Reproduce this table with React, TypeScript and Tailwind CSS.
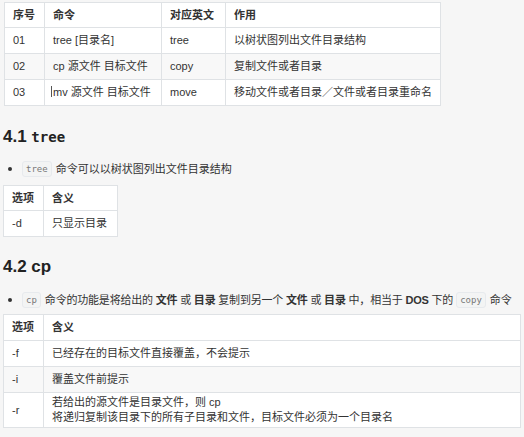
const font = "font-['Liberation_Sans','Noto_Sans_CJK_SC',sans-serif]";
const mono = "font-['DejaVu_Sans_Mono','Liberation_Mono',monospace]";

const commands = [
  { no: "01", cmd: "tree [目录名]", en: "tree", use: "以树状图列出文件目录结构" },
  { no: "02", cmd: "cp 源文件 目标文件", en: "copy", use: "复制文件或者目录" },
  { no: "03", cmd: "mv 源文件 目标文件", en: "move", use: "移动文件或者目录／文件或者目录重命名" },
];

const cpOptions = [
  { opt: "-f", desc: ["已经存在的目标文件直接覆盖，不会提示"] },
  { opt: "-i", desc: ["覆盖文件前提示"] },
  {
    opt: "-r",
    desc: [
      "若给出的源文件是目录文件，则 cp",
      "将递归复制该目录下的所有子目录和文件，目标文件必须为一个目录名",
    ],
  },
];

const th = "border border-[#dfe2e5] px-[8px] text-left font-bold whitespace-nowrap";
const td = "border border-[#dfe2e5] px-[8px] font-normal whitespace-nowrap";

function Code({ children }: { children: string }) {
  return (
    <span
      className={`${mono} ml-[1px] mr-[4px] shrink-0 rounded-[3px] border border-[#e7eaed] bg-[#f3f4f4] px-[3px] py-[1px] text-[9px] leading-[12px] text-[#777]`}
    >
      {children}
    </span>
  );
}

function Bullet({ children }: { children: React.ReactNode }) {
  return (
    <div className="flex h-[18px] items-center pl-[5px]">
      <span className="mr-[9px] h-[4px] w-[4px] shrink-0 rounded-full bg-[#333]" />
      <div className="flex items-center whitespace-nowrap">{children}</div>
    </div>
  );
}

export default function App() {
  return (
    <div className={`${font} h-[437px] w-[524px] overflow-hidden bg-[#f6f6f6] pl-[3px] pt-[2px] text-[11px] text-[#333]`}>
      {/* command overview */}
      <table className="ml-[1px] table-fixed border-collapse bg-white">
        <thead>
          <tr className="h-[25px]">
            <th className={`${th} w-[40px]`}>序号</th>
            <th className={`${th} w-[117px]`}>命令</th>
            <th className={`${th} w-[64px]`}>对应英文</th>
            <th className={`${th} w-[214px]`}>作用</th>
          </tr>
        </thead>
        <tbody>
          {commands.map((c, i) => (
            <tr key={c.no} className={`h-[26px] ${i % 2 === 1 ? "bg-[#f8f8f8]" : "bg-white"}`}>
              <td className={td}>{c.no}</td>
              <td className={`${td} relative`}>
                {c.no === "03" && (
                  <span className="absolute left-[6px] top-[6px] h-[11px] w-[1px] bg-[#555]" />
                )}
                {c.cmd}
              </td>
              <td className={td}>{c.en}</td>
              <td className={td}>{c.use}</td>
            </tr>
          ))}
        </tbody>
      </table>

      {/* 4.1 tree */}
      <h2 className="mt-[19px] flex h-[24px] items-center text-[17px] font-bold text-[#222]">
        4.1&nbsp;<span className={`${mono} text-[14px]`}>tree</span>
      </h2>
      <div className="mt-[11px]">
        <Bullet>
          <Code>tree</Code>
          <span>命令可以以树状图列出文件目录结构</span>
        </Bullet>
      </div>
      <table className="mt-[7px] table-fixed border-collapse bg-white">
        <thead>
          <tr className="h-[25px]">
            <th className={`${th} w-[40px]`}>选项</th>
            <th className={`${th} w-[74px]`}>含义</th>
          </tr>
        </thead>
        <tbody>
          <tr className="h-[26px]">
            <td className={td}>-d</td>
            <td className={td}>只显示目录</td>
          </tr>
        </tbody>
      </table>

      {/* 4.2 cp */}
      <h2 className="mt-[18px] flex h-[24px] items-center text-[17px] font-bold text-[#222]">4.2 cp</h2>
      <div className="mt-[12px]">
        <Bullet>
          <Code>cp</Code>
          <span className="mr-[2px] tracking-[-0.2px]">
            命令的功能是将给出的 <b>文件</b> 或 <b>目录</b> 复制到另一个 <b>文件</b> 或 <b>目录</b> 中，相当于{" "}
            <b>DOS</b> 下的
          </span>
          <Code>copy</Code>
          <span>命令</span>
        </Bullet>
      </div>
      <table className="mt-[5px] table-fixed border-collapse bg-white">
        <thead>
          <tr className="h-[26px]">
            <th className={`${th} w-[40px]`}>选项</th>
            <th className={`${th} w-[477px]`}>含义</th>
          </tr>
        </thead>
        <tbody>
          {cpOptions.map((o, i) => (
            <tr
              key={o.opt}
              className={`${o.desc.length > 1 ? "h-[35px]" : "h-[26px]"} ${i % 2 === 1 ? "bg-[#f8f8f8]" : "bg-white"}`}
            >
              <td className={td}>{o.opt}</td>
              <td className={`${td} leading-[15px]`}>
                {o.desc.map((line) => (
                  <div key={line}>{line}</div>
                ))}
              </td>
            </tr>
          ))}
        </tbody>
      </table>
    </div>
  );
}
